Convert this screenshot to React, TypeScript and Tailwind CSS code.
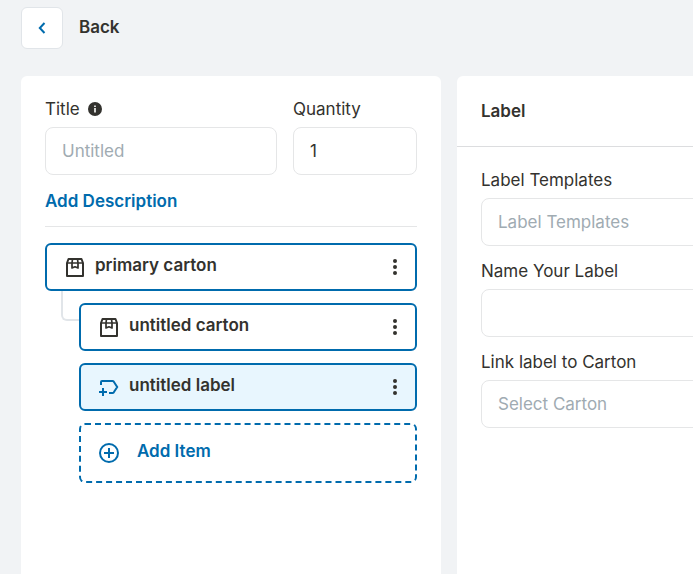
import type { ReactNode } from "react";

const fieldClass =
    "block w-full h-12 rounded-lg border border-[#e5e6e7] bg-white px-4 text-[#33322e] placeholder:text-[#a0abb2] outline-none focus:border-[#006bad]";

const BoxIcon = () => (
    <svg className="w-5 h-5 shrink-0" viewBox="0 0 20 20" fill="none" stroke="#33322e" strokeWidth="2" strokeLinejoin="round" aria-hidden="true">
        <path d="M2 6v13h16V6l-1.500-4h-13L2 6Z" />
        <path d="M2 6h16" strokeWidth="1.500" />
        <path d="M7.500 2 7 6v5l3-1.200 3 1.200V6l-.5-4" strokeWidth="1.700" />
    </svg>
);

const LabelIcon = () => (
    <svg className="w-5 h-5 shrink-0" viewBox="0 0 20 20" fill="none" stroke="#006bad" strokeWidth="2" aria-hidden="true">
        <path d="M2 8V5q0-1 1-1h10.500q.8 0 1.300.7L18.200 10l-3.400 5.300q-.5.700-1.300.700H10" />
        <path d="M4 11v8M0 15h8" />
    </svg>
);

const PlusIcon = () => (
    <svg className="w-5 h-5 shrink-0" viewBox="0 0 20 20" fill="none" stroke="currentColor" strokeWidth="2" aria-hidden="true">
        <circle cx="10" cy="10" r="9" />
        <path d="M10 5v10M5 10h10" />
    </svg>
);

const InfoIcon = () => (
    <svg className="w-3.5 h-3.5" viewBox="0 0 14 14" aria-hidden="true">
        <circle cx="7" cy="7" r="7" fill="#33322e" />
        <path d="M6 3.500h2v1.500H6zM6 6h2v4.500H6z" fill="#d5d5d3" />
    </svg>
);

interface FieldProps {
    id: string;
    label: string;
    hint?: ReactNode;
    className?: string;
    children: ReactNode;
}

const Field = ({ id, label, hint, className, children }: FieldProps) => (
    <div className={className}>
        <label htmlFor={id} className="mb-1.5 flex items-center gap-2">
            {label}
            {hint}
        </label>
        {children}
    </div>
);

interface ItemProps {
    name: string;
    icon: ReactNode;
    active?: boolean;
}

const Item = ({ name, icon, active }: ItemProps) => (
    <div className={`flex h-12 items-center rounded-md border-2 border-[#006bad] pl-[18px] pr-2.5 ${active ? "bg-[#e8f6fe]" : "bg-white"}`}>
        {icon}
        <span className="ml-2.5 flex-1 pb-1 font-semibold">{name}</span>
        <button type="button" aria-label={`Options for ${name}`} className="flex h-6 w-5 items-center justify-center">
            <svg className="h-4 w-1" viewBox="0 0 4 16" fill="#33322e" aria-hidden="true">
                <circle cx="2" cy="2" r="2" />
                <circle cx="2" cy="8" r="2" />
                <circle cx="2" cy="14" r="2" />
            </svg>
        </button>
    </div>
);

const App = () => {
    return (
        <div className="flex min-h-screen flex-col overflow-hidden bg-[#f1f3f5] pl-[21px] font-['Inter',sans-serif] text-[17px] leading-6 text-[#33322e]">
            <header className="flex items-center gap-4 pt-[7px]">
                <button type="button" aria-label="Go back" className="flex h-[42px] w-[42px] items-center justify-center rounded-md border border-[#e1e5e9] bg-white">
                    <svg className="h-3 w-2" viewBox="0 0 8 12" fill="none" stroke="#006bad" strokeWidth="2" aria-hidden="true">
                        <path d="M6.500 1 1.800 6l4.700 5" />
                    </svg>
                </button>
                <span className="pb-0.5 font-semibold">Back</span>
            </header>

            <main className="mt-[27px] flex flex-1 gap-4">
                <section className="w-[420px] shrink-0 rounded-t-md bg-white px-6 pt-[21px]">
                    <div className="flex gap-4">
                        <Field id="title" label="Title" hint={<InfoIcon />} className="flex-1">
                            <input id="title" type="text" placeholder="Untitled" className={fieldClass} />
                        </Field>
                        <Field id="quantity" label="Quantity" className="w-[124px]">
                            <input id="quantity" type="text" inputMode="numeric" defaultValue="1" className={fieldClass} />
                        </Field>
                    </div>

                    <div className="mb-4 border-b border-[#e5e6e7] pt-3.5 pb-[13px]">
                        <button type="button" className="block font-semibold text-[#006bad]">Add Description</button>
                    </div>

                    <Item name="primary carton" icon={<BoxIcon />} />
                    <div className="relative mt-3 pl-[34px]">
                        <span className="absolute -top-3 left-4 h-[30px] w-[18px] rounded-bl-md border-b-2 border-l-2 border-[#e1e5e9]" />
                        <ul className="space-y-3">
                            <li>
                                <Item name="untitled carton" icon={<BoxIcon />} />
                            </li>
                            <li>
                                <Item name="untitled label" icon={<LabelIcon />} active />
                            </li>
                            <li>
                                <button type="button" className="flex h-[60px] w-full items-center rounded-md border-2 border-dashed border-[#006bad] pl-[18px] font-semibold text-[#006bad]">
                                    <PlusIcon />
                                    <span className="ml-[18px] pb-1">Add Item</span>
                                </button>
                            </li>
                        </ul>
                    </div>
                </section>

                <section className="min-w-[420px] flex-1 rounded-t-md bg-white">
                    <h2 className="border-b border-[#dcdddf] px-6 py-[23px] font-semibold">Label</h2>
                    <div className="space-y-[13px] px-6 pt-[21px]">
                        <Field id="template" label="Label Templates">
                            <select id="template" defaultValue="" className={`${fieldClass} appearance-none text-[#a0abb2]`}>
                                <option value="">Label Templates</option>
                            </select>
                        </Field>
                        <Field id="name" label="Name Your Label">
                            <input id="name" type="text" className={fieldClass} />
                        </Field>
                        <Field id="carton" label="Link label to Carton">
                            <select id="carton" defaultValue="" className={`${fieldClass} appearance-none text-[#a0abb2]`}>
                                <option value="">Select Carton</option>
                            </select>
                        </Field>
                    </div>
                </section>
            </main>
        </div>
    );
};

export default App;
